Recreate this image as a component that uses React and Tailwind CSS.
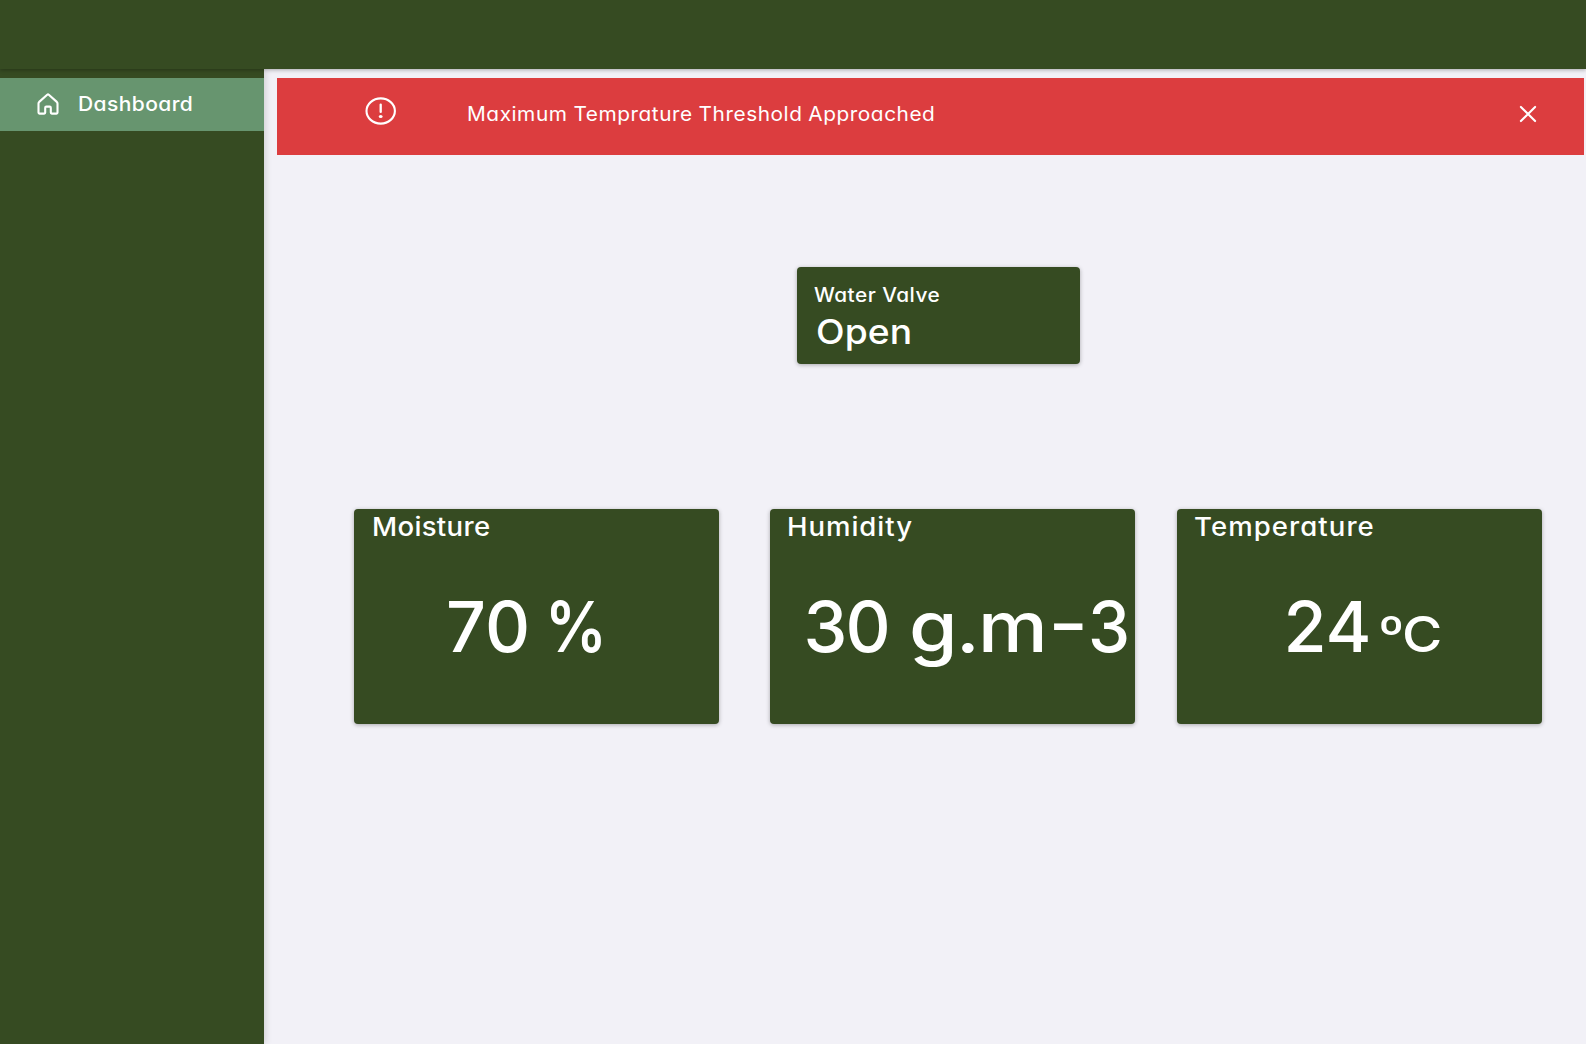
import clsx from "clsx";

/* One run of glyphs with a fixed box, so that figures and units line up on one baseline. */
function Run({ className, inner, children }) {
  return (
    <span className={clsx("block shrink-0 whitespace-nowrap", className)}>
      <span className={clsx("inline-block origin-left", inner)}>{children}</span>
    </span>
  );
}

function HomeIcon() {
  return (
    <svg className="-mt-px size-[22px]" viewBox="0 0 22 22" fill="none" stroke="white" strokeWidth="2.1" strokeLinejoin="round" strokeLinecap="round">
      <path d="M1.5 10.6c0-.7.2-1.2.7-1.7L10.2 1.7c.5-.4 1.1-.4 1.6 0l8 7.2c.5.5.7 1 .7 1.7v9c0 .6-.4 1-1 1h-4.7c-.6 0-1-.4-1-1v-4.9c0-.7-.4-1.1-1.1-1.1h-3.400c-.7 0-1.1.4-1.1 1.1v4.9c0 .6-.4 1-1 1H2.500c-.6 0-1-.4-1-1z" />
    </svg>
  );
}

function AlertIcon() {
  return (
    <svg className="h-[28px] w-[31px]" viewBox="0 0 31 28" fill="none" stroke="white" strokeWidth="2.1" strokeLinecap="round">
      <ellipse cx="15.7" cy="14" rx="14.2" ry="12.6" />
      <path d="M15.7 7.7v7.2" strokeWidth="2.3" />
      <ellipse cx="15.7" cy="19.6" rx="1.9" ry="1.5" fill="white" stroke="none" />
    </svg>
  );
}

function CloseIcon() {
  return (
    <svg className="size-[18px]" viewBox="0 0 18 18" fill="none" stroke="white" strokeWidth="2.1" strokeLinecap="round">
      <path d="M1.9 1.9l14.2 14.2M16.1 1.9L1.9 16.1" />
    </svg>
  );
}

function Card({ title, titleClass, className, children }) {
  return (
    <section className={clsx("h-[214.5px] w-[365px] shrink-0 rounded-[4px] bg-[#364b22] shadow-[0_1px_4px_rgba(0,0,0,0.3)]", className)}>
      <h2 className={clsx("mt-[3px] h-[30px] w-fit origin-left scale-x-106 text-[26px] leading-[30px] font-[450]", titleClass)}>{title}</h2>
      <div className="mt-[43px] flex h-[84px] items-baseline text-[70px] leading-[84px] font-medium">{children}</div>
    </section>
  );
}

export default function App() {
  return (
    <div className="flex h-[1044px] w-[1586px] flex-col overflow-hidden bg-[#f2f1f7] font-['Inter','Open_Sans',sans-serif] text-white [font-feature-settings:'cv11']">
      <header className="z-10 h-[69px] shrink-0 bg-[#364b22] shadow-[0_1px_4px_rgba(0,0,0,0.3)]" />
      <div className="flex min-h-0 flex-1">
        <aside className="w-[264px] shrink-0 bg-[#364b22] pt-[9px] shadow-[0_0_8px_rgba(0,0,0,0.2)]">
          <nav>
            <a className="flex h-[53px] items-center bg-[#67956f] pl-[37px]">
              <HomeIcon />
              <span className="-mt-[2px] ml-[19px] origin-left scale-x-105 text-[20px] font-[450] tracking-[0.4px]">Dashboard</span>
            </a>
          </nav>
        </aside>
        <main className="flex min-w-0 flex-1 flex-col pt-[9px]">
          <div role="alert" className="ml-[13px] flex h-[77px] w-[1307px] shrink-0 items-start bg-[#dc3d3f]">
            <div className="mt-[19px] ml-[88px]"><AlertIcon /></div>
            <p className="mt-[24px] ml-[71px] origin-left scale-x-104 text-[20px] leading-[24px] tracking-[0.53px] whitespace-nowrap [word-spacing:-0.5px]">Maximum Temprature Threshold Approached</p>
            <button aria-label="Close" className="mt-[26.5px] mr-[47px] ml-auto"><CloseIcon /></button>
          </div>
          <section className="mt-[111.5px] ml-[533px] h-[97px] w-[282.5px] shrink-0 rounded-[4px] bg-[#364b22] shadow-[0_1px_4px_rgba(0,0,0,0.3)]">
            <h2 className="mt-[16.5px] ml-[17px] h-[24px] w-fit origin-left scale-x-104 text-[20px] leading-[24px] font-[450] tracking-[0.45px]">Water Valve</h2>
            <p className="mt-[4px] ml-[18.5px] w-fit origin-left scale-x-108 text-[34.5px] leading-[42px] font-[450] tracking-[0.1px]">Open</p>
          </section>
          <div className="mt-[145.5px] ml-[90px] flex">
            <Card title="Moisture" titleClass="ml-[17.5px] tracking-[0.3px]">
              <Run className="ml-[92px] w-[99px]">70</Run>
              <Run className="font-semibold" inner="scale-x-88">%</Run>
            </Card>
            <Card className="ml-[50.5px]" title="Humidity" titleClass="ml-[17.5px] tracking-[0.9px]">
              <Run className="ml-[34px] w-[105px]" inner="tracking-[-2px]">30</Run>
              <Run className="w-[137px]" inner="scale-x-112 tracking-[-1.5px]">g.m</Run>
              <Run className="ml-[2.5px] w-[39.5px]" inner="-translate-y-[4px] scale-x-125">-</Run>
              <Run inner="scale-x-96">3</Run>
            </Card>
            <Card className="ml-[42px]" title="Temperature" titleClass="ml-[17px] tracking-[1px]">
              <Run className="ml-[107px] w-[94px]">24</Run>
              <Run className="w-[24.5px] text-[54px]" inner="translate-y-[2px] scale-x-106 scale-y-92">º</Run>
              <Run className="text-[50px]" inner="scale-x-110">C</Run>
            </Card>
          </div>
        </main>
      </div>
    </div>
  );
}
